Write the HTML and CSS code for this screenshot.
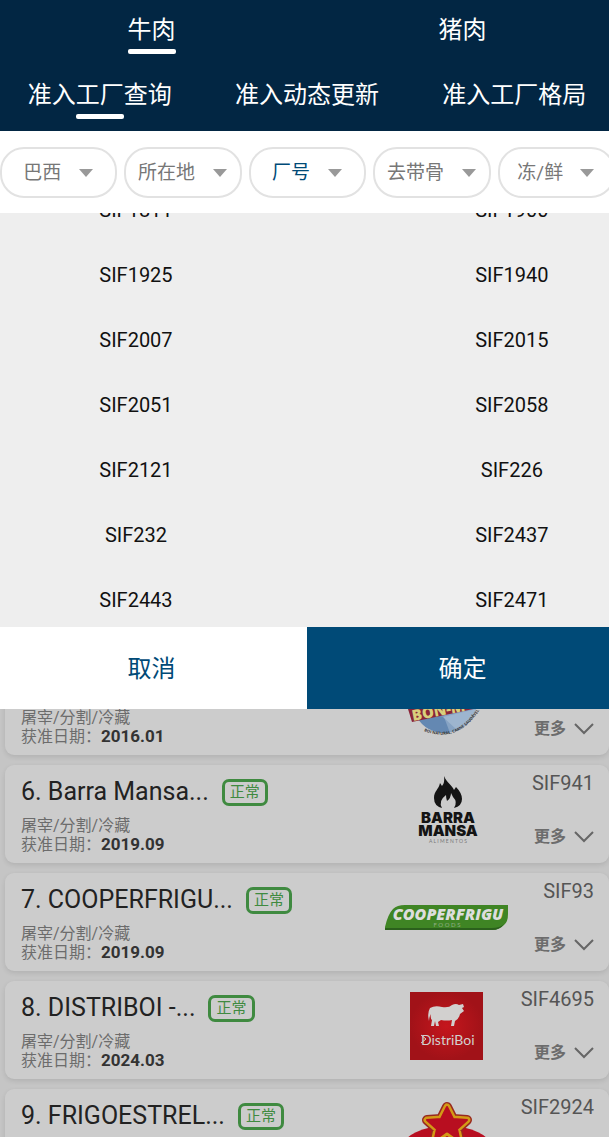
FILE: index.html
```
<!DOCTYPE html>
<html lang="zh-CN">

<head>
	<meta charset="UTF-8">
	<meta name="viewport" content="width=device-width, initial-scale=1.0">
	<title>准入工厂查询</title>
	<link rel="stylesheet" href="styles.css">
</head>

<body>
	<div class="app">
		<header class="header">
			<nav class="tabs">
				<a href="#beef" class="tab active">牛肉</a>
				<a href="#pork" class="tab">猪肉</a>
			</nav>
			<nav class="tabs">
				<a href="#query" class="tab active">准入工厂查询</a>
				<a href="#updates" class="tab">准入动态更新</a>
				<a href="#layout" class="tab">准入工厂格局</a>
			</nav>
		</header>

		<div class="filters">
			<label class="filter">
				<select aria-label="国家"><option>巴西</option></select>
				<svg class="arrow" viewBox="0 0 14 8"><path d="M0 0h14L7 8z"/></svg>
			</label>
			<label class="filter">
				<select aria-label="所在地"><option>所在地</option></select>
				<svg class="arrow" viewBox="0 0 14 8"><path d="M0 0h14L7 8z"/></svg>
			</label>
			<label class="filter current">
				<select aria-label="厂号"><option>厂号</option></select>
				<svg class="arrow" viewBox="0 0 14 8"><path d="M0 0h14L7 8z"/></svg>
			</label>
			<label class="filter">
				<select aria-label="去带骨"><option>去带骨</option></select>
				<svg class="arrow" viewBox="0 0 14 8"><path d="M0 0h14L7 8z"/></svg>
			</label>
			<label class="filter">
				<select aria-label="冻/鲜"><option>冻/鲜</option></select>
				<svg class="arrow" viewBox="0 0 14 8"><path d="M0 0h14L7 8z"/></svg>
			</label>
		</div>

		<div class="picker">
			<div class="picker-list">
				<button class="choice">SIF1811</button>
				<button class="choice">SIF1900</button>
				<button class="choice">SIF1925</button>
				<button class="choice">SIF1940</button>
				<button class="choice">SIF2007</button>
				<button class="choice">SIF2015</button>
				<button class="choice">SIF2051</button>
				<button class="choice">SIF2058</button>
				<button class="choice">SIF2121</button>
				<button class="choice">SIF226</button>
				<button class="choice">SIF232</button>
				<button class="choice">SIF2437</button>
				<button class="choice">SIF2443</button>
				<button class="choice">SIF2471</button>
			</div>
		</div>
		<div class="actions">
			<button class="action cancel">取消</button>
			<button class="action confirm">确定</button>
		</div>

		<main class="factories">
			<div class="factory-list">
				<article class="card">
					<div class="info">
						<div class="heading"></div>
						<p>屠宰/分割/冷藏</p>
						<p>获准日期：<b>2016.01</b></p>
					</div>
					<svg class="logo" viewBox="0 0 124 78" role="img" aria-label="Bon-Mart">
						<circle cx="60" cy="34" r="32" fill="#86a3c4"/>
						<path d="M32 50q14-4 27 0l6 16q-24 1-33-16z" fill="#6488b2"/>
						<path d="M58 50l33-8q-5 15-19 21z" fill="#9db5cf"/>
						<path d="M23 42l70-14v13L27 55z" fill="#8a2438"/>
						<text x="28" y="54" class="bon-name" transform="rotate(-11 28 54)">BON-M</text>
						<path id="bon-arc" d="M39 64Q74 78 97 39" fill="none"/>
						<text class="bon-arc"><textPath href="#bon-arc">BOI NATURAL, CARNE SAUDÁVEL</textPath></text>
					</svg>
					<div class="side">
						<button class="more">更多<svg class="chevron" viewBox="0 0 20 12"><path d="M1 1l9 9 9-9"/></svg></button>
					</div>
				</article>

				<article class="card">
					<div class="info">
						<div class="heading"><h2>6. Barra Mansa...</h2><span class="badge">正常</span></div>
						<p>屠宰/分割/冷藏</p>
						<p>获准日期：<b>2019.09</b></p>
					</div>
					<svg class="logo" viewBox="0 0 124 78" role="img" aria-label="Barra Mansa">
						<path d="M59 1C62 8 67 10 69 15L71 12Q77 18 77 24Q77 31 69 33Q73 27 68 22L66 18Q66 23 62 26Q61 23 61 20Q53 26 57 33Q49 31 49 23C49 16 54 14 55 8L57 11Q60 8 59 1z" fill="#141414"/>
						<text x="63" y="48" class="barra-name">BARRA</text>
						<text x="63" y="61" class="barra-name">MANSA</text>
						<text x="63" y="68" class="barra-sub">A L I M E N T O S</text>
					</svg>
					<div class="side">
						<span>SIF941</span>
						<button class="more">更多<svg class="chevron" viewBox="0 0 20 12"><path d="M1 1l9 9 9-9"/></svg></button>
					</div>
				</article>

				<article class="card">
					<div class="info">
						<div class="heading"><h2>7. COOPERFRIGU...</h2><span class="badge">正常</span></div>
						<p>屠宰/分割/冷藏</p>
						<p>获准日期：<b>2019.09</b></p>
					</div>
					<svg class="logo" viewBox="0 0 124 78" role="img" aria-label="Cooperfrigu Foods">
						<path d="M0 47V44Q3 31 8 26Q12 22 20 22H123V31Q123 39 119 42Q114 47 107 47z" fill="#3f8524"/>
						<path d="M0 45H107Q115 45 119 41Q115 47 107 47H0z" fill="#2b601c"/>
						<text x="63" y="37" class="cooper-name">COOPERFRIGU</text>
						<text x="62" y="44" class="cooper-sub">F O O D S</text>
					</svg>
					<div class="side">
						<span>SIF93</span>
						<button class="more">更多<svg class="chevron" viewBox="0 0 20 12"><path d="M1 1l9 9 9-9"/></svg></button>
					</div>
				</article>

				<article class="card">
					<div class="info">
						<div class="heading"><h2>8. DISTRIBOI -...</h2><span class="badge">正常</span></div>
						<p>屠宰/分割/冷藏</p>
						<p>获准日期：<b>2024.03</b></p>
					</div>
					<svg class="logo" viewBox="0 0 124 78" role="img" aria-label="DistriBoi">
						<defs>
							<radialGradient id="distri-red">
								<stop offset="0" stop-color="#c5161d"/>
								<stop offset="1" stop-color="#a11218"/>
							</radialGradient>
						</defs>
						<rect x="25" y="1" width="73" height="68" fill="url(#distri-red)"/>
						<path d="M45 17Q50 14 57 16Q64 17 67 14Q71 12 74 14L78 13L79 16L77 17L79 20L75 23Q74 28 70 30L69 35H66L67 29Q62 30 56 29L53 31L54 35H51L50 30L49 35H46L47 29Q45 27 46 23Q44 26 44 30Q42 22 45 17z" fill="#d2d0cf"/>
						<text x="36" y="54" class="distri-name">DistriBoi</text>
						<path d="M36 44l5 4-5 4" fill="none" stroke="#d2d0cf"/>
					</svg>
					<div class="side">
						<span>SIF4695</span>
						<button class="more">更多<svg class="chevron" viewBox="0 0 20 12"><path d="M1 1l9 9 9-9"/></svg></button>
					</div>
				</article>

				<article class="card">
					<div class="info">
						<div class="heading"><h2>9. FRIGOESTREL...</h2><span class="badge">正常</span></div>
						<p>屠宰/分割/冷藏</p>
						<p>获准日期：<b>2019.09</b></p>
					</div>
					<svg class="logo" viewBox="0 0 124 78" role="img" aria-label="Frigoestrela">
						<ellipse cx="62" cy="48" rx="44" ry="21" fill="#b80e20"/>
						<g fill="#b80e20" stroke-linejoin="round">
							<path d="M62 8l6 12 14 1-10 9 3 14-13-7-13 7 3-14-10-9 14-1z" stroke="#98281f" stroke-width="10"/>
							<path d="M62 8l6 12 14 1-10 9 3 14-13-7-13 7 3-14-10-9 14-1z" stroke="#d39a16" stroke-width="7"/>
							<path d="M62 8l6 12 14 1-10 9 3 14-13-7-13 7 3-14-10-9 14-1z" stroke="#b80e20" stroke-width="2"/>
							<path d="M55 40l7-5 7 5" fill="none" stroke="#d39a16" stroke-width="3"/>
						</g>
					</svg>
					<div class="side">
						<span>SIF2924</span>
						<button class="more">更多<svg class="chevron" viewBox="0 0 20 12"><path d="M1 1l9 9 9-9"/></svg></button>
					</div>
				</article>
			</div>
		</main>
	</div>
</body>

</html>
```
FILE: styles.css
```
*
{
	box-sizing: border-box;
}

body
{
	margin: 0;
	overflow: hidden;
	font-family: Roboto, "Noto Sans CJK SC", sans-serif;
	background-color: #c5c5c5;
}

button,
select
{
	font-family: inherit;
	border: none;
	padding: 0;
	margin: 0;
	background: none;
	cursor: pointer;
}

/* the app canvas is slightly wider than the window */
.app
{
	display: flex;
	flex-direction: column;
	height: 100vh;
	margin: 0 -9px 0 -4px;
}

.header
{
	flex: none;
	background-color: #022643;
	padding-bottom: 1px;
}

.tabs
{
	display: flex;
}

.tab
{
	flex: 1;
	display: flex;
	flex-direction: column;
	align-items: center;
	height: 65px;
	padding-top: 12px;
	font-size: 24px;
	line-height: 36px;
	color: #ffffff;
	text-decoration: none;
}

.tab.active::after
{
	content: "";
	width: 48px;
	height: 5px;
	margin-top: 1px;
	border-radius: 2px;
	background-color: #ffffff;
}

.filters
{
	flex: none;
	display: flex;
	gap: 7px;
	padding: 16px 3px 15px 4px;
	background-color: #ffffff;
}

.filter
{
	flex: 1;
	display: flex;
	align-items: center;
	justify-content: center;
	gap: 17px;
	height: 51px;
	padding-right: 1px;
	border: 2px solid #e2e2e2;
	border-radius: 24px;
	color: #777777;
}

.filter select
{
	appearance: none;
	font-size: 19px;
	line-height: 28px;
	color: inherit;
}

.filter.current
{
	color: #004a77;
}

.arrow
{
	flex: none;
	width: 14px;
	height: 8px;
	fill: #999999;
}

.picker
{
	flex: none;
	height: 414px;
	overflow: hidden;
	background-color: #eeeeee;
}

/* list scrolled part way through a row */
.picker-list
{
	display: grid;
	grid-template-columns: repeat(2, 45%);
	grid-auto-rows: 65px;
	column-gap: 96px;
	margin-top: -36px;
}

.choice
{
	font-size: 20px;
	color: #111111;
}

.actions
{
	flex: none;
	display: flex;
}

.action
{
	flex: 1;
	height: 82px;
	padding-bottom: 4px;
	font-size: 24px;
}

.cancel
{
	background-color: #ffffff;
	color: #004a77;
}

.confirm
{
	background-color: #004a77;
	color: #ffffff;
}

.factories
{
	flex: 1;
	min-height: 0;
	overflow: hidden;
}

.factory-list
{
	display: flex;
	flex-direction: column;
	gap: 10px;
	margin-top: -52px;
	padding: 0 9px;
}

.card
{
	display: flex;
	padding: 0 15px 0 16px;
	border-radius: 9px;
	background-color: #cccccc;
	box-shadow: 0 2px 5px rgba(0, 0, 0, 0.1);
}

.info
{
	flex: 1;
	padding: 10px 0 9px;
}

.heading
{
	display: flex;
	align-items: center;
	gap: 13px;
	min-height: 34px;
	margin-bottom: 7px;
}

.heading h2
{
	margin: 0;
	font-size: 25px;
	font-weight: normal;
	line-height: 34px;
	color: #222222;
}

.badge
{
	padding: 0 5px;
	border: 3px solid #3f8a40;
	border-radius: 7px;
	font-size: 15px;
	line-height: 21px;
	color: #3f8a40;
}

.info p
{
	margin: 0;
	font-size: 16px;
	line-height: 19px;
	color: #6c6c6c;
}

.info b
{
	font-size: 17px;
	color: #333333;
}

.logo
{
	flex: none;
	width: 124px;
	height: 78px;
	margin-top: 10px;
}

.side
{
	display: flex;
	flex-direction: column;
	align-items: flex-end;
	justify-content: space-between;
	width: 85px;
	padding: 8px 0 16px;
	font-size: 20px;
	line-height: 20px;
	color: #555555;
}

.more
{
	display: flex;
	align-items: center;
	gap: 8px;
	margin-top: auto;
	font-size: 16px;
	font-weight: bold;
	line-height: 20px;
	color: #6c6c6c;
}

.chevron
{
	width: 20px;
	height: 12px;
	fill: none;
	stroke: #666666;
	stroke-width: 2;
}

.bon-name
{
	font: 800 15px "Open Sans", sans-serif;
	fill: #d8cf7c;
}

.bon-arc
{
	font: bold 4px "Open Sans", sans-serif;
	fill: #333333;
}

.barra-name
{
	font: 900 15px Inter, sans-serif;
	text-anchor: middle;
	fill: #141414;
}

.barra-sub
{
	font: 5px Lato, sans-serif;
	text-anchor: middle;
	fill: #777777;
}

.cooper-name
{
	font: italic 800 16px "Open Sans", sans-serif;
	text-anchor: middle;
	fill: #dddddd;
}

.cooper-sub
{
	font: 6px Lato, sans-serif;
	text-anchor: middle;
	fill: #8fae84;
}

.distri-name
{
	font: 14px Lato, sans-serif;
	fill: #d2d0cf;
}
```
